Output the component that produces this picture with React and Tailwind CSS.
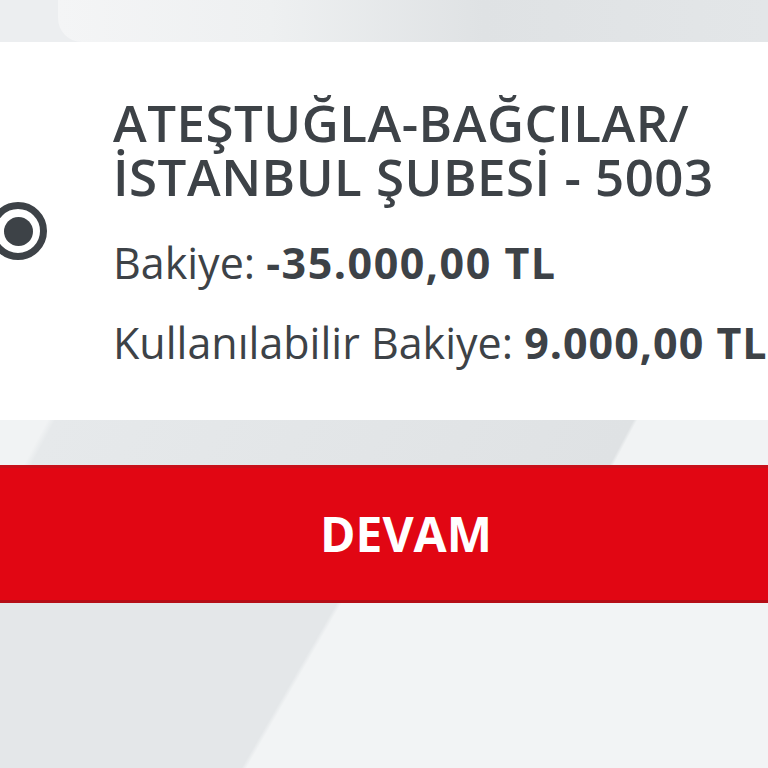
export default function App() {
    return (
        <div className="w-[768px] h-[768px] overflow-hidden bg-[#e6e9eb] flex flex-col" style={{ fontFamily: '"Open Sans", "Liberation Sans", sans-serif' }}>
            {/* TOP BAND */}
            <div className="h-[42px] shrink-0 bg-[#eceef0] flex">
                <div className="ml-[58px] flex-1 rounded-bl-[24px] bg-[linear-gradient(90deg,#f4f5f6_0%,#eef0f1_30%,#dfe2e4_60%,#e3e6e8_100%)]"></div>
            </div>

            {/* ACCOUNT CARD */}
            <div className="h-[378px] shrink-0 bg-white flex items-center">
                <div className="-ml-[11px] w-[58px] h-[58px] shrink-0 rounded-full border-[7px] border-[#3d4247] flex items-center justify-center">
                    <div className="w-[29px] h-[29px] rounded-full bg-[#3d4247]"></div>
                </div>
                <div className="ml-[66px] flex flex-col text-[#3d4247] whitespace-nowrap">
                    <div className="text-[51px] font-semibold leading-[54px] tracking-[0.5px]">
                        ATEŞTUĞLA-BAĞCILAR/<br />İSTANBUL ŞUBESİ - 5003
                    </div>
                    <div className="mt-[35px] text-[43px] leading-[50px]">
                        Bakiye: <span className="font-bold tracking-[1.5px]">-35.000,00 TL</span>
                    </div>
                    <div className="mt-[30px] text-[43px] leading-[50px]">
                        Kullanılabilir Bakiye: <span className="font-bold tracking-[1px]">9.000,00 TL</span>
                    </div>
                </div>
            </div>

            {/* MIDDLE BAND */}
            <div className="h-[45px] shrink-0 bg-[linear-gradient(118deg,#f1f3f4_6%,#e6e9eb_7%,#dfe2e4_80%,#f1f3f4_80.5%)]"></div>

            {/* DEVAM BUTTON */}
            <button type="button" className="h-[138px] shrink-0 w-full pl-[44px] bg-[#e10613] border-t-[3px] border-t-[#c8101a] border-b-[3px] border-b-[#b50d16] text-white text-[48px] font-bold">
                DEVAM
            </button>

            {/* BOTTOM */}
            <div className="flex-1 bg-[linear-gradient(120deg,#e4e7e9_39%,#f2f4f5_39.6%)]"></div>
        </div>
    )
}
